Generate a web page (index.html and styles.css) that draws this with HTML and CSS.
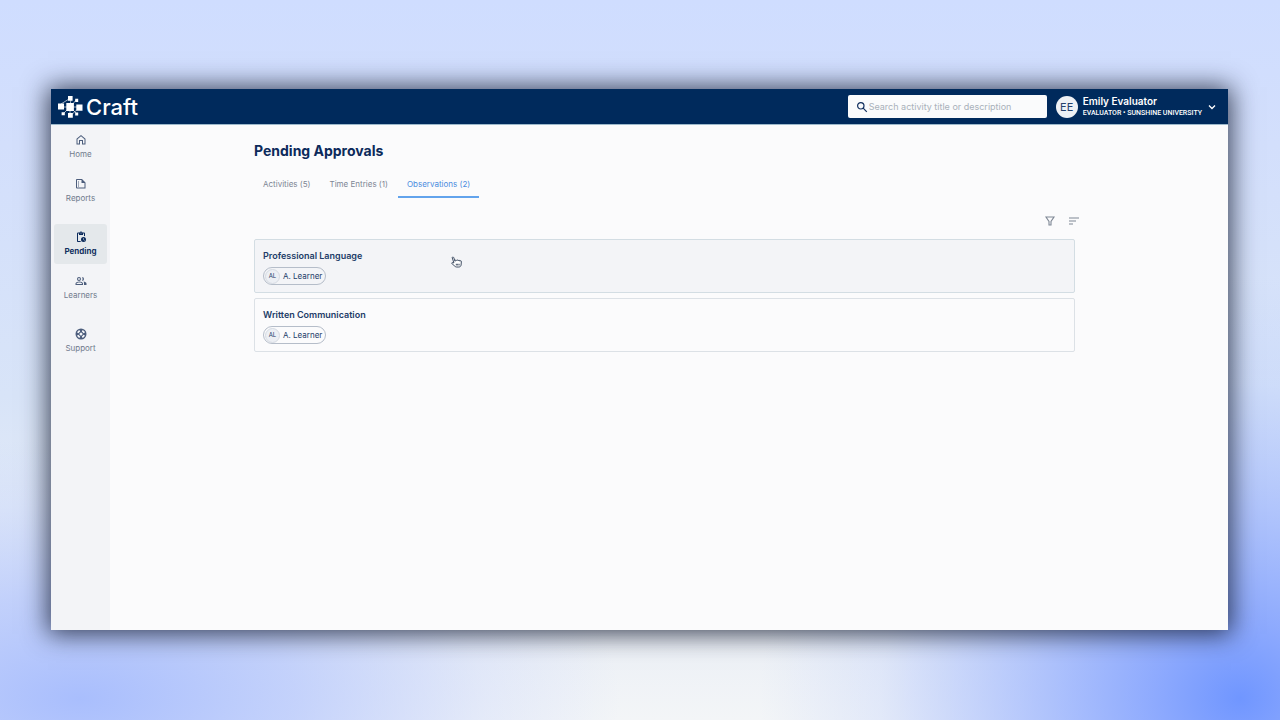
FILE: index.html
```
<!DOCTYPE html>
<html lang="en">
<head>
<meta charset="utf-8">
<meta name="viewport" content="width=device-width, initial-scale=1">
<title>Craft – Pending Approvals</title>
<link rel="stylesheet" href="styles.css">
</head>
<body>
<div class="window">
  <header class="topbar">
    <a class="brand" href="#">
      <svg class="brand-mark" viewBox="0 0 25 23" aria-hidden="true">
        <path d="M3 8 11 3M13 3 12 10M18 4 14 9M3 11H22M5 18 10 13M12 13V20M12 20 21 12M18 17 14 13" stroke="#fff" stroke-width=".8" opacity=".8" fill="none"/>
        <path fill="#fff" d="M8.300 7h7.600v8H8.300zM0 7.500h6v6H0zM18.300 8.500h6.200v6.300h-6.200zM10 0h4.600v4.800H10zM10 17h4.800v4.800H10zM17.200 2.700h3v3.200h-3zM3.600 16.200h3.200v3H3.600zM17.200 16.600h3v3h-3z"/>
      </svg>
      <span>Craft</span>
    </a>
    <div class="tools">
      <label class="search">
        <svg viewBox="0 0 12 12" aria-hidden="true"><circle cx="4.800" cy="4.800" r="3.200"/><path d="m7.200 7.200 3.600 3.600"/></svg>
        <input type="search" aria-label="Search" placeholder="Search activity title or description">
      </label>
      <button class="account" type="button">
        <span class="avatar">EE</span>
        <span class="who"><strong>Emily Evaluator</strong><small>EVALUATOR • SUNSHINE UNIVERSITY</small></span>
        <svg class="chevron" viewBox="0 0 10 10" aria-hidden="true"><path d="m2 3.500 3 3 3-3"/></svg>
      </button>
    </div>
  </header>
  <div class="body">
    <nav class="sidebar" aria-label="Main">
      <div class="group">
        <a class="item" href="#">
          <svg viewBox="0 0 24 24" aria-hidden="true"><path d="M12 2 3 9.500V21h7v-7h4v7h7V9.500zm7 17h-3v-7H8v7H5v-8.600l7-5.800 7 5.800z"/></svg>
          <span>Home</span>
        </a>
        <a class="item" href="#">
          <svg viewBox="0 0 24 24" aria-hidden="true"><path fill-rule="evenodd" d="M4 2h10l7 7v12H4a2 2 0 0 1-2-2V4c0-1.100.9-2 2-2zm0 2v15h15v-9h-6V4zM6 7h2v2H6zm0 4h2v2H6zm0 4h2v2H6z"/></svg>
          <span>Reports</span>
        </a>
      </div>
      <div class="group">
        <a class="item active" href="#" aria-current="page">
          <svg viewBox="0 0 24 24" aria-hidden="true"><path d="M17 12a5 5 0 1 0 0 10 5 5 0 0 0 0-10zm1.650 7.350L16.500 17.200V14h1v2.790l1.850 1.850-.7.710zM18 3h-3.180a3 3 0 0 0-5.640 0H6a2 2 0 0 0-2 2v15c0 1.100.9 2 2 2h6.110a6.700 6.700 0 0 1-1.420-2H6V5h2v3h8V5h2v5.080c.71.100 1.380.310 2 .6V5a2 2 0 0 0-2-2zm-6 2a1 1 0 1 1 0-2 1 1 0 0 1 0 2z"/></svg>
          <span>Pending</span>
        </a>
        <a class="item" href="#">
          <svg viewBox="0 0 24 24" aria-hidden="true"><path fill-rule="evenodd" d="M8 4a4 4 0 1 0 0 8 4 4 0 0 0 0-8zm0 2.200a1.800 1.800 0 1 1 0 3.600 1.800 1.800 0 0 1 0-3.600zM14 4a4 4 0 1 1 0 8c1.500-2 1.500-6 0-8zM9 13c-3 0-8 1.400-8 4v3h15v-3c0-2.600-4-4-7-4zm-6 5v-1c.5-1 3.500-2 6-2s4.500 1 5 2v1zM17 13.200c3 .4 6 1.800 6 3.800v3h-5v-3c0-1.500-.4-2.800-1-3.800z"/></svg>
          <span>Learners</span>
        </a>
      </div>
      <div class="group">
        <a class="item" href="#">
          <svg viewBox="0 0 24 24" aria-hidden="true"><path fill-rule="evenodd" d="M12 1a11 11 0 1 0 0 22 11 11 0 0 0 0-22zm7.900 7.900-3.200 1.370a4.980 4.980 0 0 0-2.950-2.940l1.300-3.200c2.200.8 4 2.500 4.850 4.770zM12 15a3 3 0 1 1 0-6 3 3 0 0 1 0 6zM8.900 4.100l1.400 3.220a5 5 0 0 0-2.980 2.970L4.100 8.900a8.400 8.400 0 0 1 4.800-4.800zM4.100 15.100l3.220-1.380a4.970 4.970 0 0 0 2.970 2.960L8.900 19.900a8.400 8.400 0 0 1-4.800-4.800zm11 4.800-1.370-3.220a4.980 4.980 0 0 0 2.950-2.970l3.220 1.390a8.400 8.400 0 0 1-4.800 4.800z"/></svg>
          <span>Support</span>
        </a>
      </div>
    </nav>
    <main class="content">
      <h1>Pending Approvals</h1>
      <div class="tabs" role="tablist">
        <button type="button" role="tab" aria-selected="false">Activities (5)</button>
        <button type="button" role="tab" aria-selected="false">Time Entries (1)</button>
        <button type="button" role="tab" aria-selected="true">Observations (2)</button>
      </div>
      <div class="actions">
        <button type="button" aria-label="Filter"><svg viewBox="0 0 12 12" aria-hidden="true"><path d="M2 2h8L7 6.500V10H5V6.500z"/></svg></button>
        <button type="button" aria-label="Sort"><svg viewBox="0 0 12 12" aria-hidden="true"><path d="M1 3h10M1 6h7M1 9h4"/></svg></button>
      </div>
      <div class="cards">
        <article class="card hovered">
          <h2>Professional Language</h2>
          <span class="chip"><span class="initials">AL</span>A. Learner</span>
          <svg class="pointer" viewBox="0 0 12 14" aria-hidden="true"><path d="M4.500 7 3 2.800C2.500 1.500 1 2 1.400 3.200L3.200 8.500 2 8.200C.8 7.800.4 9 1.200 9.500l3 2.600c.6.600 1.200.9 2 .9h2.300c1.500 0 2.300-.9 2.500-2.200l.3-3.600c.1-1.200-1.200-1.500-1.500-.5 0-1.200-1.500-1.400-1.700-.4 0-1.200-1.500-1.300-1.800-.3C6 5.200 4.500 5.200 4.100 6.400M5.800 9.500v1.800M7.300 9.500v1.800M8.800 9.500v1.800"/></svg>
        </article>
        <article class="card">
          <h2>Written Communication</h2>
          <span class="chip"><span class="initials">AL</span>A. Learner</span>
        </article>
      </div>
    </main>
  </div>
</div>
</body>
</html>
```
FILE: styles.css
```
* { box-sizing: border-box; }

body {
  margin: 0;
  min-height: 100vh;
  display: flex;
  padding: 89px 52px 90px 51px;
  font-family: Inter, "Liberation Sans", sans-serif;
  font-size: 8px;
  color: #12305f;
  background:
    radial-gradient(ellipse 480px 420px at 1240px 97%, #7096ff 0%, #7f9fffdd 18%, #93aeffa0 45%, #b0c5ff40 75%, #b0c5ff00 100%),
    radial-gradient(ellipse 540px 260px at 80px 97%, #a9befd 0%, #b4c6fdbb 40%, #c4d2fd50 75%, #c4d2fd00 100%),
    linear-gradient(180deg, #cfddff 0%, #d3dffc 20%, #d8e4f8 55%, #e9eef6 85%, #f3f5f7 100%);
}

a { color: inherit; text-decoration: none; }
button { font: inherit; color: inherit; background: none; border: 0; padding: 0; }

.window {
  flex: 1;
  display: flex;
  flex-direction: column;
  background: #fbfbfc;
  box-shadow: 0 1px 24px 3px #10182ccc;
}

.topbar {
  display: flex;
  justify-content: space-between;
  align-items: center;
  height: 36px;
  padding: 0 11px 0 7px;
  background: #002a5c;
  border-bottom: 1px solid #9db9cb;
}

.brand {
  display: flex;
  align-items: center;
  gap: 3px;
  padding-top: 1px;
  color: #fff;
  font-size: 22px;
  font-weight: 500;
  line-height: 24px;
}
.brand-mark { width: 25px; height: 23px; }

.tools { display: flex; align-items: center; gap: 9px; }

.search {
  display: flex;
  align-items: center;
  gap: 1px;
  width: 199px;
  height: 23px;
  padding: 0 8px;
  background: #fafbfc;
  border-radius: 2px;
}
.search svg { flex: none; width: 12px; height: 12px; fill: none; stroke: #12305f; stroke-width: 1.2; }
.search input {
  flex: 1;
  min-width: 0;
  padding: 0;
  border: 0;
  outline: 0;
  background: none;
  font: inherit;
  font-size: 9px;
  color: #12305f;
}
.search input::placeholder { color: #a9b1ba; opacity: 1; }

.account { display: flex; align-items: center; gap: 5px; color: #fff; text-align: left; }
.avatar {
  display: grid;
  place-items: center;
  width: 22px;
  height: 22px;
  border-radius: 50%;
  background: #eef1f5;
  color: #24406b;
  font-size: 11px;
}
.who { display: grid; min-width: 119px; }
.who strong { font-size: 10px; font-weight: 600; line-height: 13px; }
.who small { font-family: Roboto, sans-serif; font-size: 7px; font-weight: 500; line-height: 10px; }
.chevron { width: 10px; height: 10px; fill: none; stroke: #fff; stroke-width: 1.3; }

.body { flex: 1; display: flex; }

.sidebar {
  display: flex;
  flex-direction: column;
  gap: 13px;
  width: 59px;
  padding: 2px 3px;
  background: #f3f4f7;
}
.group { display: grid; gap: 4px; }
.item {
  display: flex;
  flex-direction: column;
  align-items: center;
  justify-content: center;
  gap: 2px;
  height: 40px;
  border-radius: 3px;
  line-height: 12px;
  color: #717b8d;
}
.item svg { width: 12px; height: 12px; fill: #4c5d7c; }
.item.active { background: #e4e8eb; color: #12305f; font-weight: 700; }
.item.active svg { fill: #0b2a5b; }

.content { flex: 1; padding: 16px 153px 24px 144px; }
h1 { margin: 0; font-size: 14px; font-weight: 700; line-height: 20px; color: #0c2a5b; }

.tabs { display: flex; gap: 1px; margin-top: 10px; }
.tabs button {
  height: 27px;
  padding: 0 9px;
  line-height: 12px;
  color: #7d8694;
  border-bottom: 2px solid transparent;
}
.tabs button[aria-selected="true"] { color: #4c8de0; border-color: #62a3ec; }

.actions { display: flex; justify-content: flex-end; gap: 12px; margin: 17px -5px 0 0; }
.actions button { display: grid; width: 12px; height: 12px; }
.actions svg { width: 12px; height: 12px; fill: none; stroke: #7e8794; stroke-width: 1.1; }

.cards { display: grid; gap: 5px; margin-top: 12px; }
.card {
  position: relative;
  min-height: 54px;
  padding: 9px 8px 0;
  border: 1px solid #dce1e6;
  border-radius: 2px;
}
.card.hovered { background: #f3f4f7; border-color: #d3dde3; }
.card h2 { margin: 0; font-size: 9px; font-weight: 600; line-height: 13px; color: #223c68; }
.chip {
  display: inline-flex;
  align-items: center;
  gap: 3px;
  height: 18px;
  margin-top: 5px;
  padding: 0 3px 0 1px;
  border: 1px solid #b5bdc9;
  border-radius: 9px;
  line-height: 12px;
  color: #223c68;
}
.initials {
  display: grid;
  place-items: center;
  width: 15px;
  height: 15px;
  border: 1px solid #d5dae2;
  border-radius: 50%;
  background: #eceff4;
  font-size: 6px;
}
.pointer {
  position: absolute;
  left: 196px;
  top: 15px;
  width: 11px;
  height: 13px;
  fill: #fff;
  stroke: #2e3d55;
  stroke-width: 1;
}
```
